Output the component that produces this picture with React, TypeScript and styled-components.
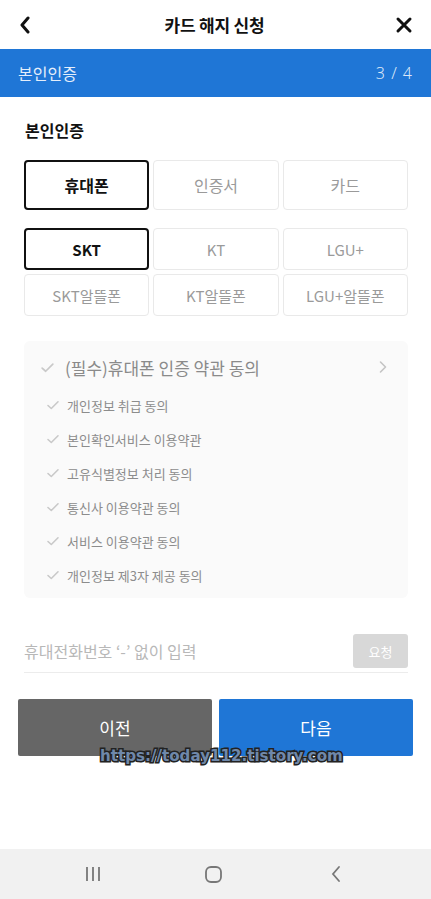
import React from "react";
import styled, { createGlobalStyle } from "styled-components";

const Global = createGlobalStyle`
  html, body { margin: 0; padding: 0; background: #fff; }
  body { font-family: "Noto Sans CJK KR", "Noto Sans", sans-serif; }
  * { box-sizing: border-box; }
`;

const Page = styled.div`
  width: 431px;
  height: 899px;
  display: flex;
  flex-direction: column;
  position: relative;
  overflow: hidden;
  background: #fff;
`;

const TopBar = styled.header`
  height: 49px;
  display: flex;
  align-items: center;
  justify-content: space-between;
  padding: 0 18px 0 16px;
`;

const Title = styled.h1`
  margin: 0;
  font-size: 17px;
  font-weight: 700;
  color: #111;
  letter-spacing: -0.2px;
`;

const IconBtn = styled.span`
  width: 18px;
  height: 18px;
  display: flex;
  align-items: center;
  justify-content: center;
`;

const StepBar = styled.div`
  height: 48px;
  background: #1f76d6;
  display: flex;
  align-items: center;
  justify-content: space-between;
  padding: 0 18px;
  color: #e4eefb;
  font-size: 16px;
`;

const StepCount = styled.span`
  font-family: "Noto Sans", sans-serif;
  font-size: 16px;
  font-weight: 300;
  letter-spacing: 1px;
  color: #dbe7f8;
`;

const Content = styled.main`
  flex: 1;
  padding: 20px 23px 0 24px;
  display: flex;
  flex-direction: column;
`;

const SectionTitle = styled.h2`
  margin: 1px 0 18px 1px;
  font-size: 16px;
  font-weight: 700;
  color: #111;
  line-height: 24px;
`;

const Grid = styled.div<{ $gap: number; $mb: number }>`
  display: grid;
  grid-template-columns: repeat(3, 1fr);
  column-gap: 4px;
  row-gap: ${(p) => p.$gap}px;
  margin-bottom: ${(p) => p.$mb}px;
`;

const Choice = styled.button<{ $active?: boolean; $h: number; $size: number }>`
  height: ${(p) => p.$h}px;
  border-radius: 4px;
  background: #fff;
  border: ${(p) => (p.$active ? "2px solid #111" : "1px solid #e9e9e9")};
  color: ${(p) => (p.$active ? "#111" : "#9a9a9a")};
  font-weight: ${(p) => (p.$active ? 700 : 400)};
  font-size: ${(p) => p.$size}px;
  font-family: "Noto Sans CJK KR", "Noto Sans", sans-serif;
  padding: 0;
`;

const TermsBox = styled.section`
  margin-top: 25px;
  background: #fafafa;
  border-radius: 6px;
  padding: 13px 20px 6px 16px;
  display: flex;
  flex-direction: column;
`;

const MainTerm = styled.div`
  display: flex;
  align-items: center;
  height: 26px;
  color: #8a8a8a;
  font-size: 17px;
  margin-bottom: 8px;
`;

const MainLabel = styled.span`
  flex: 1;
  margin-left: 10px;
`;

const SubTerm = styled.div`
  display: flex;
  align-items: center;
  height: 34px;
  padding-left: 6px;
  color: #8c8c8c;
  font-size: 13px;
`;

const SubLabel = styled.span`
  margin-left: 7px;
`;

const PhoneRow = styled.div`
  margin-top: 36px;
  display: flex;
  align-items: center;
  justify-content: space-between;
  height: 34px;
  border-bottom: 1px solid #ececec;
  padding-bottom: 4px;
  box-sizing: content-box;
`;

const Placeholder = styled.span`
  color: #b8b8b8;
  font-size: 16px;
`;

const RequestBtn = styled.button`
  width: 55px;
  height: 34px;
  border: none;
  border-radius: 3px;
  background: #d8d8d8;
  color: #fff;
  font-size: 13px;
  font-family: "Noto Sans CJK KR", "Noto Sans", sans-serif;
`;

const Actions = styled.div`
  margin: 26px -5px 0 -6px;
  display: grid;
  grid-template-columns: 1fr 1fr;
  gap: 7px;
`;

const ActionBtn = styled.button<{ $primary?: boolean }>`
  height: 57px;
  border: none;
  border-radius: 2px;
  background: ${(p) => (p.$primary ? "#1f76d6" : "#666666")};
  color: #fff;
  font-size: 17px;
  font-family: "Noto Sans CJK KR", "Noto Sans", sans-serif;
`;

const Watermark = styled.div`
  position: absolute;
  left: 100px;
  top: 747px;
  font-family: "DejaVu Sans", sans-serif;
  font-weight: 700;
  font-size: 15.1px;
  letter-spacing: 0;
  color: #6f88aa;
  -webkit-text-stroke: 3px #222;
  paint-order: stroke fill;
`;

const NavBar = styled.nav`
  height: 50px;
  background: #f1f1f1;
  display: flex;
  align-items: center;
  padding-left: 85px;
`;

const NavIcon = styled.span<{ $ml: number }>`
  display: flex;
  margin-left: ${(p) => p.$ml}px;
`;

const Check = ({ size = 14 }: { size?: number }) => (
  <svg width={size} height={size} viewBox="0 0 14 14">
    <path d="M2 7.5 L5.3 10.5 L12 3.8" fill="none" stroke="#c9c9c9" strokeWidth="1.6" strokeLinecap="round" strokeLinejoin="round" />
  </svg>
);

const subTerms = [
  "개인정보 취급 동의",
  "본인확인서비스 이용약관",
  "고유식별정보 처리 동의",
  "통신사 이용약관 동의",
  "서비스 이용약관 동의",
  "개인정보 제3자 제공 동의",
];

export default function App() {
  return (
    <Page>
      <Global />
      <TopBar>
        <IconBtn>
          <svg width="14" height="18" viewBox="0 0 14 18">
            <path d="M10 2 L4 9 L10 16" fill="none" stroke="#111" strokeWidth="3" strokeLinecap="round" strokeLinejoin="round" />
          </svg>
        </IconBtn>
        <Title>카드 해지 신청</Title>
        <IconBtn>
          <svg width="18" height="18" viewBox="0 0 18 18">
            <path d="M3 3 L15 15 M15 3 L3 15" stroke="#111" strokeWidth="3" strokeLinecap="round" />
          </svg>
        </IconBtn>
      </TopBar>
      <StepBar>
        <span>본인인증</span>
        <StepCount>3 / 4</StepCount>
      </StepBar>
      <Content>
        <SectionTitle>본인인증</SectionTitle>
        <Grid $gap={0} $mb={18}>
          <Choice $active $h={50} $size={16}>휴대폰</Choice>
          <Choice $h={50} $size={16}>인증서</Choice>
          <Choice $h={50} $size={16}>카드</Choice>
        </Grid>
        <Grid $gap={4} $mb={0}>
          <Choice $active $h={42} $size={15}>SKT</Choice>
          <Choice $h={42} $size={15}>KT</Choice>
          <Choice $h={42} $size={15}>LGU+</Choice>
          <Choice $h={42} $size={15}>SKT알뜰폰</Choice>
          <Choice $h={42} $size={15}>KT알뜰폰</Choice>
          <Choice $h={42} $size={15}>LGU+알뜰폰</Choice>
        </Grid>
        <TermsBox>
          <MainTerm>
            <Check size={15} />
            <MainLabel>(필수)휴대폰 인증 약관 동의</MainLabel>
            <svg width="10" height="14" viewBox="0 0 10 14">
              <path d="M2.5 2 L7.5 7 L2.5 12" fill="none" stroke="#c4c4c4" strokeWidth="1.6" strokeLinecap="round" strokeLinejoin="round" />
            </svg>
          </MainTerm>
          {subTerms.map((t) => (
            <SubTerm key={t}>
              <Check />
              <SubLabel>{t}</SubLabel>
            </SubTerm>
          ))}
        </TermsBox>
        <PhoneRow>
          <Placeholder>휴대전화번호 ‘-’ 없이 입력</Placeholder>
          <RequestBtn>요청</RequestBtn>
        </PhoneRow>
        <Actions>
          <ActionBtn>이전</ActionBtn>
          <ActionBtn $primary>다음</ActionBtn>
        </Actions>
      </Content>
      <Watermark>https://today112.tistory.com</Watermark>
      <NavBar>
        <NavIcon $ml={0}>
          <svg width="16" height="16" viewBox="0 0 16 16">
            <path d="M2 1 V15 M8 1 V15 M14 1 V15" stroke="#777" strokeWidth="1.8" />
          </svg>
        </NavIcon>
        <NavIcon $ml={104}>
          <svg width="17" height="17" viewBox="0 0 17 17">
            <rect x="1" y="1" width="15" height="15" rx="5" fill="none" stroke="#777" strokeWidth="1.8" />
          </svg>
        </NavIcon>
        <NavIcon $ml={108}>
          <svg width="12" height="18" viewBox="0 0 12 18">
            <path d="M9 2 L3 9 L9 16" fill="none" stroke="#777" strokeWidth="1.8" strokeLinecap="round" />
          </svg>
        </NavIcon>
      </NavBar>
    </Page>
  );
}
